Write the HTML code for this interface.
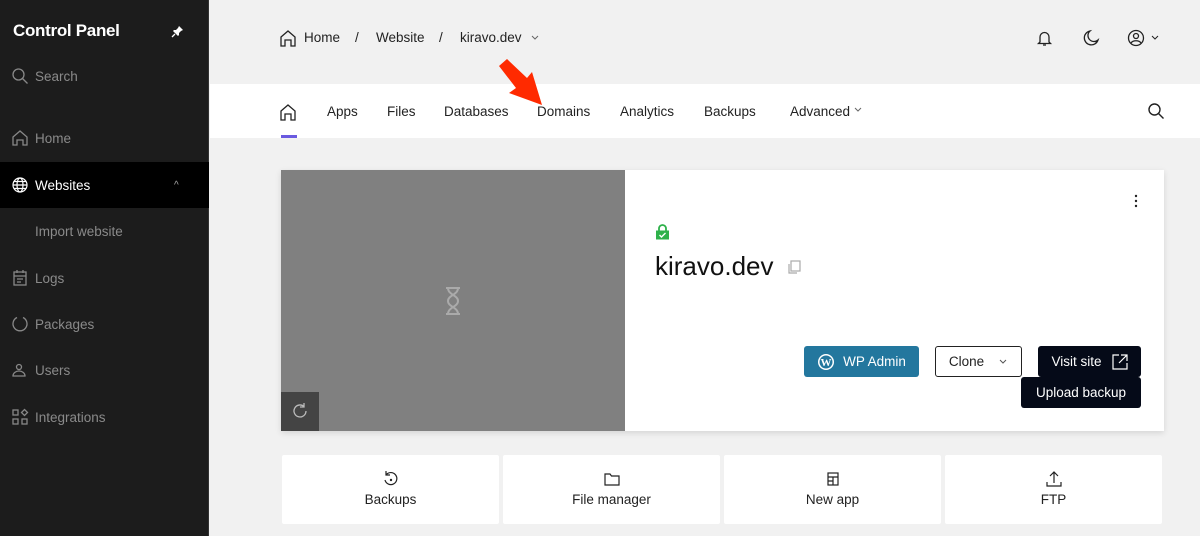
<!DOCTYPE html>
<html><head><style>
*{box-sizing:border-box;margin:0;padding:0}
body{width:1200px;height:536px;overflow:hidden;background:#f1f1f1;font-family:"Liberation Sans",sans-serif;position:relative;color:#222}
.sb{position:absolute;left:0;top:0;width:209px;height:536px;background:#1c1c1c;border-right:1px solid #333}
.sb .t{position:absolute;left:13px;top:21px;color:#fff;font-weight:bold;font-size:17px;letter-spacing:-0.3px}
.it{position:absolute;left:0;width:209px;height:46px;display:flex;align-items:center;color:#8a8a8a;font-size:13.5px}
.it svg{position:absolute;left:11px}
.it span{position:absolute;left:35px}
.abs{position:absolute}
.nav{position:absolute;left:210px;top:84px;width:990px;height:54px;background:#fff}
.nav span{position:absolute;top:20px;font-size:13.5px;color:#222}
.btn{position:absolute;height:31px;border-radius:3px;font-size:13.5px;display:flex;align-items:center;justify-content:center}
.tile{position:absolute;top:455px;width:217px;height:69px;background:#fff;border-radius:2px;font-size:13.5px;text-align:center}
.tile svg{position:absolute;left:100px;top:15px}
.tile span{position:absolute;left:0;right:0;top:37px}
</style></head><body>
<div class="sb">
<div class="t">Control Panel</div>
<svg class="abs" style="left:171px;top:25px" width="13" height="13" viewBox="0 0 13 13"><path d="M8 1l4 4-2 1-2 2 0 2-1 1-5-5 1-1 2 0 2-2z" fill="#fff"/><path d="M4 9l-3 3" stroke="#fff" stroke-width="1.3"/></svg>
<div class="it" style="top:53px"><svg width="18" height="18" viewBox="0 0 18 18" fill="none" stroke="#888" stroke-width="1.3"><circle cx="7.5" cy="7.5" r="5.5"/><path d="M11.5 11.5l5 5"/></svg><span>Search</span></div>
<div class="it" style="top:115px"><svg width="18" height="18" viewBox="0 0 18 18" fill="none" stroke="#888" stroke-width="1.3"><path d="M2 8l7-6 7 6v8h-4v-5h-6v5h-4z"/></svg><span>Home</span></div>
<div class="it" style="top:162px;background:#000;color:#fff"><svg width="18" height="18" viewBox="0 0 18 18" fill="none" stroke="#fff" stroke-width="1.2"><circle cx="9" cy="9" r="7"/><ellipse cx="9" cy="9" rx="3" ry="7"/><path d="M2 9h14M3 5.5h12M3 12.5h12"/></svg><span>Websites</span><span style="left:174px;font-size:10px;color:#aaa">^</span></div>
<div class="it" style="top:208px"><span>Import website</span></div>
<div class="it" style="top:255px"><svg width="18" height="18" viewBox="0 0 18 18" fill="none" stroke="#888" stroke-width="1.3"><rect x="3" y="3" width="12" height="13"/><path d="M3 7h12M6 1v3M12 1v3M6 10h6M6 13h4"/></svg><span>Logs</span></div>
<div class="it" style="top:301px"><svg width="18" height="18" viewBox="0 0 18 18" fill="none" stroke="#888" stroke-width="1.3"><path d="M12 2.5A7 7 0 1 1 6 2.5"/></svg><span>Packages</span></div>
<div class="it" style="top:347px"><svg width="18" height="18" viewBox="0 0 18 18" fill="none" stroke="#888" stroke-width="1.3"><circle cx="8" cy="6" r="2.5"/><path d="M2 15c0-3 3-5 6-5s6 2 6 5z"/></svg><span>Users</span></div>
<div class="it" style="top:394px"><svg width="18" height="18" viewBox="0 0 18 18" fill="none" stroke="#888" stroke-width="1.3"><rect x="2" y="2" width="5" height="5"/><rect x="2" y="11" width="5" height="5"/><rect x="11" y="11" width="5" height="5"/><path d="M13.5 1.5l3 3-3 3-3-3z"/></svg><span>Integrations</span></div>
</div>

<svg class="abs" style="left:279px;top:29px" width="18" height="18" viewBox="0 0 18 18" fill="none" stroke="#222" stroke-width="1.3"><path d="M2 8l7-6 7 6v9h-4v-6h-6v6h-4z"/></svg>
<div class="abs" style="left:304px;top:30px;font-size:13.5px">Home</div>
<div class="abs" style="left:355px;top:30px;font-size:13.5px">/</div>
<div class="abs" style="left:376px;top:30px;font-size:13.5px">Website</div>
<div class="abs" style="left:439px;top:30px;font-size:13.5px">/</div>
<div class="abs" style="left:460px;top:30px;font-size:13.5px">kiravo.dev</div>
<svg class="abs" style="left:530px;top:34px" width="10" height="8" viewBox="0 0 10 8" fill="none" stroke="#666"><path d="M2 2l3 3 3-3"/></svg>
<svg class="abs" style="left:1036px;top:29px" width="17" height="18" viewBox="0 0 17 18" fill="none" stroke="#222" stroke-width="1.3"><path d="M4 13V8a4.5 4.5 0 0 1 9 0v5l1.5 1.5h-12z"/><path d="M7 16h3"/></svg>
<svg class="abs" style="left:1082px;top:29px" width="18" height="18" viewBox="0 0 18 18" fill="none" stroke="#222" stroke-width="1.3"><path d="M8 2a7 7 0 1 0 8 9A6 6 0 0 1 8 2z"/></svg>
<svg class="abs" style="left:1127px;top:29px" width="36" height="18" viewBox="0 0 36 18" fill="none" stroke="#222" stroke-width="1.3"><circle cx="9" cy="9" r="7.5"/><circle cx="9" cy="7" r="2.5"/><path d="M4 14c2-3 8-3 10 0"/><path d="M25 7l3 3 3-3" stroke-width="1"/></svg>

<div class="nav">
<svg class="abs" style="left:69px;top:19px" width="18" height="18" viewBox="0 0 18 18" fill="none" stroke="#222" stroke-width="1.3"><path d="M2 8l7-6 7 6v9h-4v-6h-6v6h-4z"/></svg>
<div class="abs" style="left:71px;top:51px;width:16px;height:3px;background:#6a5ae0"></div>
<span style="left:117px">Apps</span><span style="left:177px">Files</span><span style="left:234px">Databases</span><span style="left:327px">Domains</span><span style="left:410px">Analytics</span><span style="left:494px">Backups</span><span style="left:580px">Advanced</span>
<svg class="abs" style="left:643px;top:22px" width="10" height="8" viewBox="0 0 10 8" fill="none" stroke="#666"><path d="M2 2l3 3 3-3"/></svg>
<svg class="abs" style="left:937px;top:18px" width="18" height="18" viewBox="0 0 18 18" fill="none" stroke="#222" stroke-width="1.4"><circle cx="7.5" cy="7.5" r="5.5"/><path d="M11.5 11.5l5 5"/></svg>
</div>
<svg class="abs" style="left:495px;top:58px" width="60" height="50" viewBox="0 0 60 50"><path d="M4 8l8-7 20 19 5-6 10 33-33-12 7-5z" fill="#ff2a00"/></svg>

<div class="abs" style="left:281px;top:170px;width:883px;height:261px;background:#fff;box-shadow:0 2px 6px rgba(0,0,0,.12)"></div>
<div class="abs" style="left:281px;top:170px;width:344px;height:261px;background:#808080"></div>
<svg class="abs" style="left:444px;top:286px" width="18" height="30" viewBox="0 0 18 30" fill="none" stroke="#aaa" stroke-width="2"><path d="M2 2h14M2 28h14M4 2c0 7 10 7 10 13S4 21 4 28M14 2c0 7-10 7-10 13s10 6 10 13"/></svg>
<div class="abs" style="left:281px;top:392px;width:38px;height:39px;background:#444"></div>
<svg class="abs" style="left:291px;top:402px" width="18" height="18" viewBox="0 0 18 18" fill="none" stroke="#bbb" stroke-width="1.3"><path d="M15 9a6 6 0 1 1-2-4.5M13 1v4h-4"/></svg>
<svg class="abs" style="left:1131px;top:194px" width="10" height="14"><circle cx="5" cy="2" r="1.2" fill="#222"/><circle cx="5" cy="7" r="1.2" fill="#222"/><circle cx="5" cy="12" r="1.2" fill="#222"/></svg>
<svg class="abs" style="left:655px;top:224px" width="15" height="16" viewBox="0 0 15 16"><path d="M4 7V4.5a3.5 3.5 0 0 1 7 0V7" stroke="#2eb14a" stroke-width="1.8" fill="none"/><rect x="1" y="6.5" width="13" height="9" fill="#2eb14a"/><path d="M4.5 11l2 2 4-4" stroke="#fff" stroke-width="1.4" fill="none"/></svg>
<div class="abs" style="left:655px;top:251px;font-size:26px;color:#111">kiravo.dev</div>
<svg class="abs" style="left:786px;top:259px" width="16" height="16" viewBox="0 0 16 16" fill="none" stroke="#aaa" stroke-width="1.2"><rect x="5" y="2" width="9" height="10"/><path d="M3 5v9h8"/></svg>

<div class="btn" style="left:804px;top:346px;width:115px;background:#23779e;color:#fff"><svg width="18" height="18" viewBox="0 0 18 18" style="margin-right:8px"><circle cx="9" cy="9" r="8" fill="#fff"/><circle cx="9" cy="9" r="6.5" fill="#23779e"/><text x="9" y="13" font-size="11" font-weight="bold" text-anchor="middle" fill="#fff" font-family="Liberation Serif">W</text></svg>WP Admin</div>
<div class="btn" style="left:935px;top:346px;width:87px;border:1px solid #222;background:#fff">Clone<svg width="10" height="8" viewBox="0 0 10 8" fill="none" stroke="#555" style="margin-left:14px"><path d="M2 2l3 3 3-3"/></svg></div>
<div class="btn" style="left:1038px;top:346px;width:103px;background:#050a18;color:#fff">Visit site<svg width="16" height="16" viewBox="0 0 16 16" fill="none" stroke="#fff" stroke-width="1.2" style="margin-left:10px"><path d="M7 1H1v14h14V9M9 1h6v6M15 1L7 9"/></svg></div>
<div class="btn" style="left:1021px;top:377px;width:120px;background:#050a18;color:#fff">Upload backup</div>

<div class="tile" style="left:282px"><svg width="18" height="18" viewBox="0 0 18 18" fill="none" stroke="#222" stroke-width="1.2"><path d="M4 5a6 6 0 1 1-1 5M4 1v4h4"/><circle cx="9" cy="10" r=".6" fill="#222"/></svg><span>Backups</span></div>
<div class="tile" style="left:503px"><svg width="18" height="18" viewBox="0 0 18 18" fill="none" stroke="#222" stroke-width="1.2"><path d="M2 4h5l1.5 2H16v9H2z"/></svg><span>File manager</span></div>
<div class="tile" style="left:724px"><svg width="18" height="18" viewBox="0 0 18 18" fill="none" stroke="#222" stroke-width="1.2"><rect x="4" y="3" width="10" height="12"/><path d="M4 7h10M9 7v8M4 11h5"/></svg><span>New app</span></div>
<div class="tile" style="left:945px"><svg width="18" height="18" viewBox="0 0 18 18" fill="none" stroke="#222" stroke-width="1.2"><path d="M9 13V2M5 6l4-4 4 4M2 12v4h14v-4"/></svg><span>FTP</span></div>
</body></html>
